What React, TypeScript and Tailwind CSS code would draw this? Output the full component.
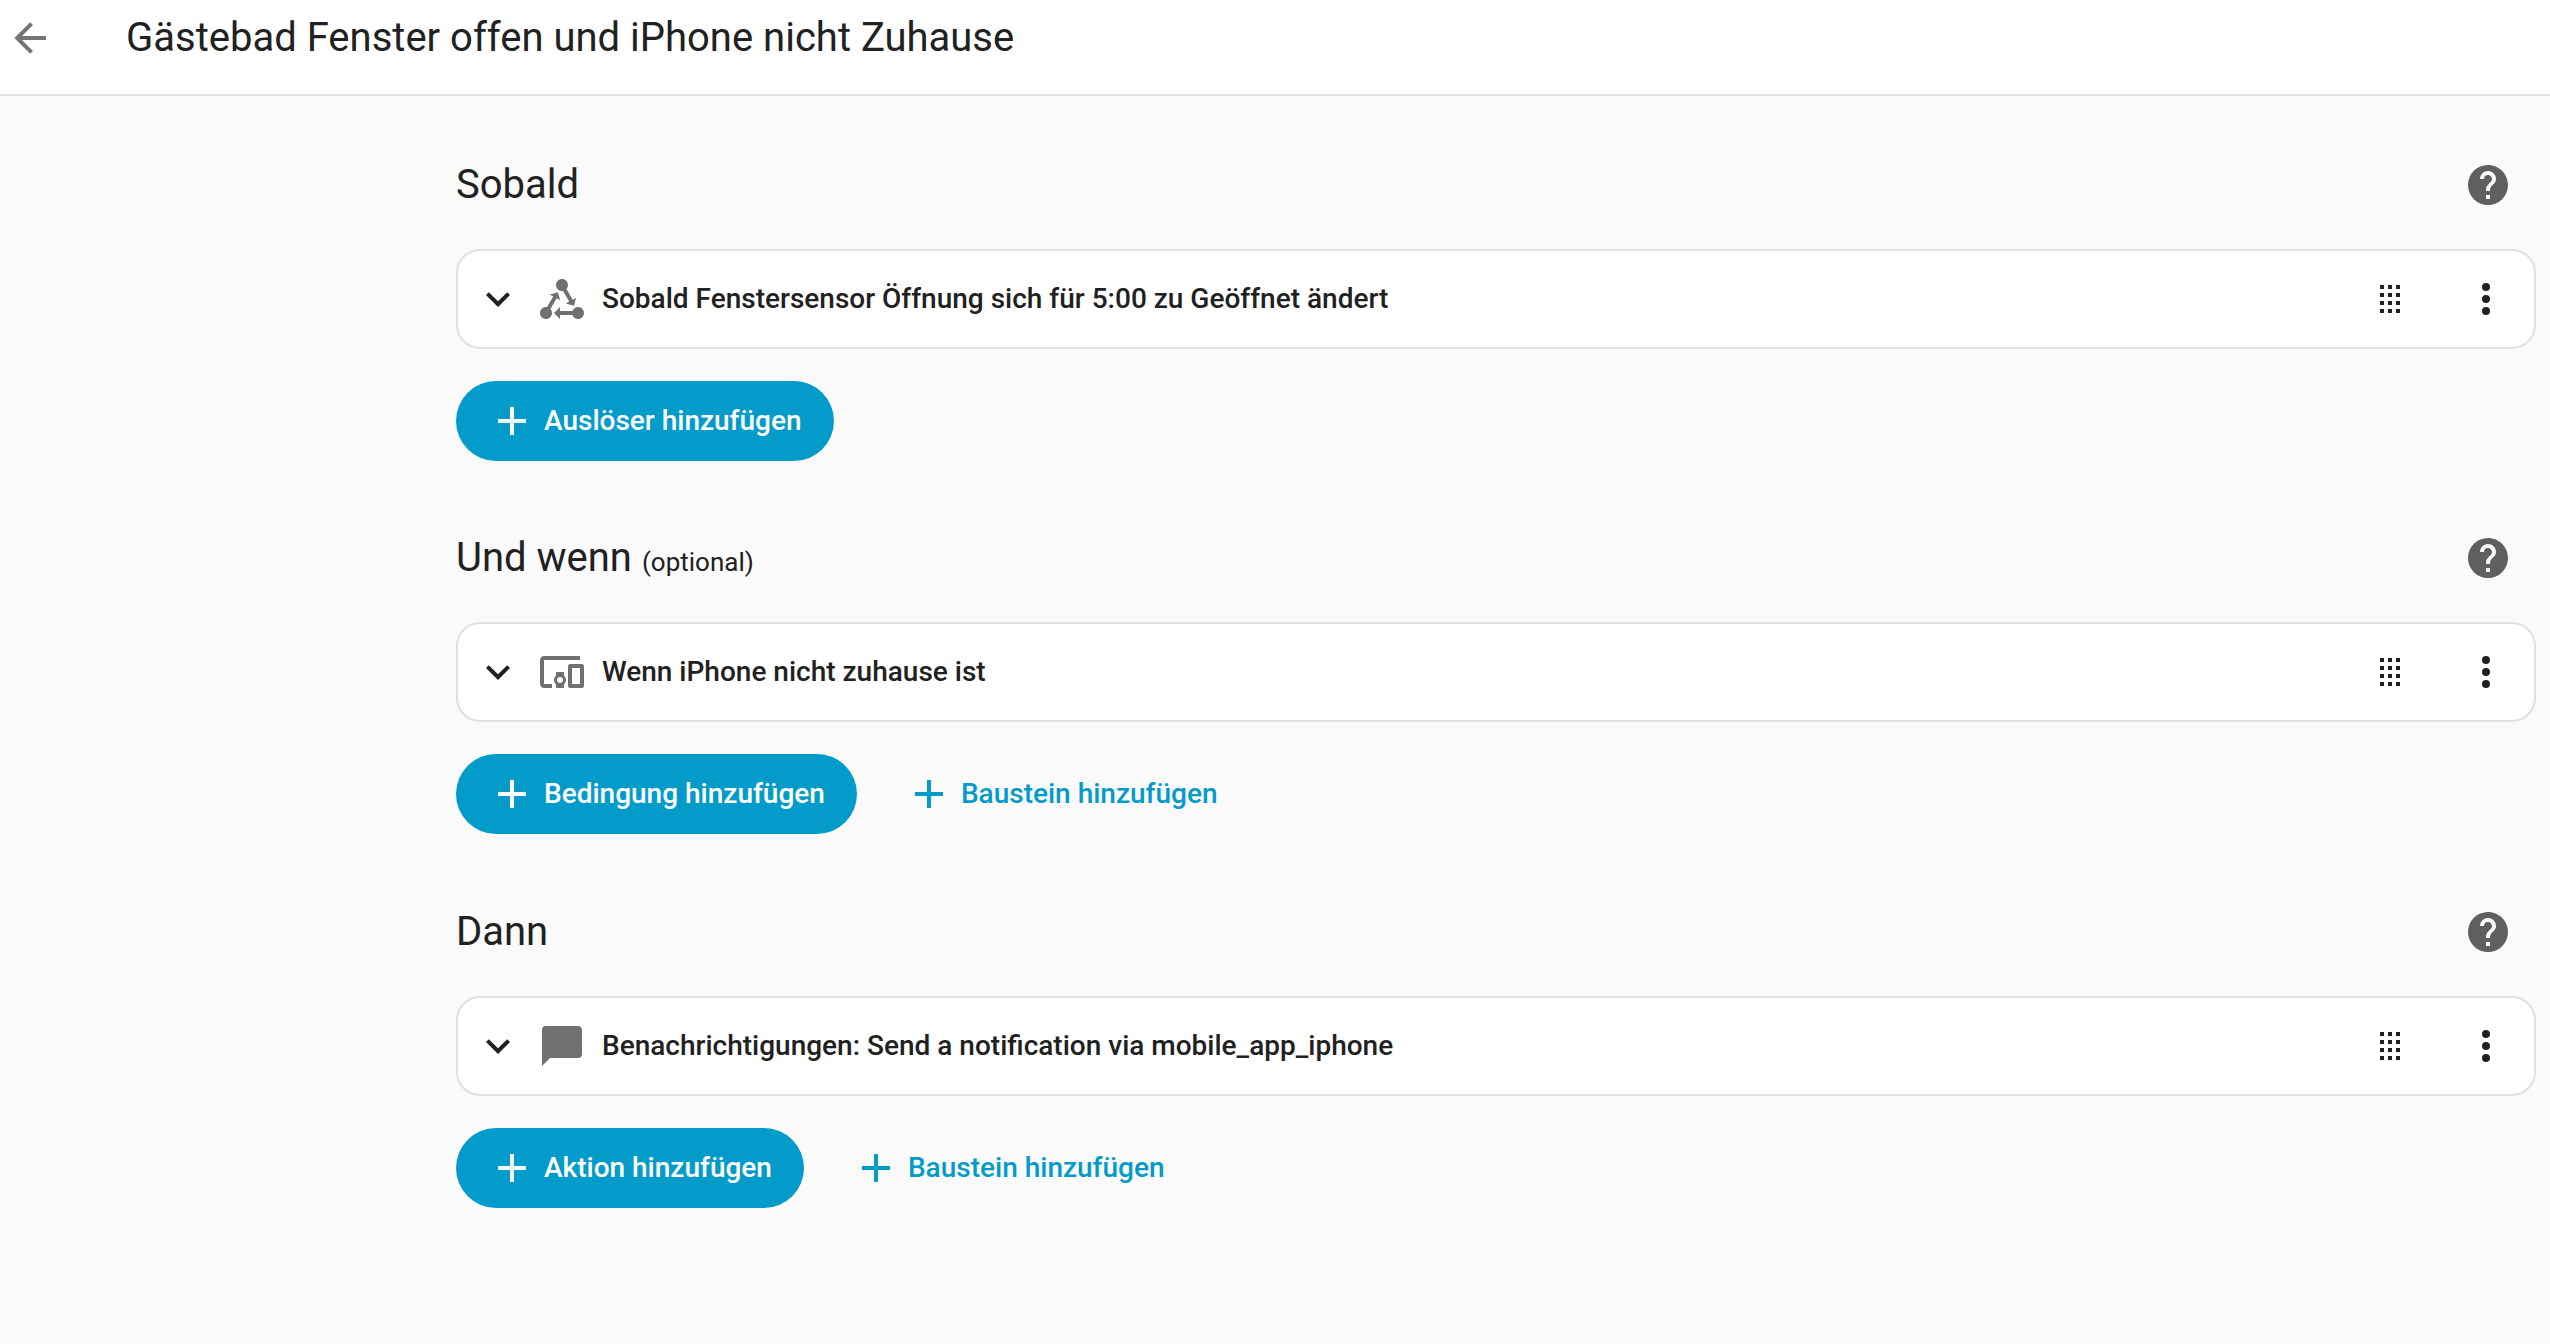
import React from "react";

const plus = "M19 13h-6v6h-2v-6H5v-2h6V5h2v6h6v2z";

function Plus() {
  return (
    <svg viewBox="0 0 24 24" className="w-12 h-12 fill-current shrink-0">
      <path d={plus} />
    </svg>
  );
}

function Help() {
  return (
    <svg viewBox="0 0 24 24" className="w-12 h-12 fill-[#5f5f5f]">
      <path d="M15.07,11.25L14.17,12.17C13.45,12.89 13,13.5 13,15H11V14.5C11,13.39 11.45,12.39 12.17,11.67L13.41,10.41C13.78,10.05 14,9.55 14,9C14,7.89 13.1,7 12,7A2,2 0 0,0 10,9H8A4,4 0 0,1 12,5A4,4 0 0,1 16,9C16,9.88 15.64,10.67 15.07,11.25M13,19H11V17H13M12,2A10,10 0 0,0 2,12A10,10 0 0,0 12,22A10,10 0 0,0 22,12C22,6.47 17.5,2 12,2Z" />
    </svg>
  );
}

function Row({ icon, text }: { icon: React.ReactNode; text: string }) {
  return (
    <div className="h-[100px] rounded-[24px] border-2 border-[#e0e0e0] bg-white flex items-center pl-4 pr-6 gap-4">
      <svg viewBox="0 0 24 24" className="w-12 h-12 fill-[#212121] shrink-0">
        <path d="M7.41 8.58L12 13.17l4.59-4.59L18 10l-6 6-6-6z" />
      </svg>
      <div className="w-12 h-12 shrink-0">{icon}</div>
      <div className="text-[28px] font-medium text-[#212121] flex-1">{text}</div>
      <svg viewBox="0 0 24 24" className="w-12 h-12 fill-[#212121] shrink-0">
        <path d="M7 19v-2h2v2H7m4 0v-2h2v2h-2m4 0v-2h2v2h-2m-8-4v-2h2v2H7m4 0v-2h2v2h-2m4 0v-2h2v2h-2m-8-4V9h2v2H7m4 0V9h2v2h-2m4 0V9h2v2h-2M7 7V5h2v2H7m4 0V5h2v2h-2m4 0V5h2v2h-2z" />
      </svg>
      <svg viewBox="0 0 24 24" className="w-12 h-12 ml-8 fill-[#212121] shrink-0">
        <path d="M12 16a2 2 0 0 1 2 2 2 2 0 0 1-2 2 2 2 0 0 1-2-2 2 2 0 0 1 2-2m0-6a2 2 0 0 1 2 2 2 2 0 0 1-2 2 2 2 0 0 1-2-2 2 2 0 0 1 2-2m0-6a2 2 0 0 1 2 2 2 2 0 0 1-2 2 2 2 0 0 1-2-2 2 2 0 0 1 2-2z" />
      </svg>
    </div>
  );
}

function Primary({ label }: { label: string }) {
  return (
    <div className="h-[80px] rounded-full bg-[#039bc9] text-white flex items-center px-8 gap-2 text-[28px] font-medium">
      <Plus />
      {label}
    </div>
  );
}

function Secondary({ label }: { label: string }) {
  return (
    <div className="h-[80px] flex items-center ml-12 gap-2 text-[#039bc9] text-[28px] font-medium">
      <Plus />
      {label}
    </div>
  );
}

function Section({
  title,
  optional,
  icon,
  text,
  primary,
  secondary,
}: {
  title: string;
  optional?: boolean;
  icon: React.ReactNode;
  text: string;
  primary: string;
  secondary?: boolean;
}) {
  return (
    <section className="mb-[73.4px]">
      <div className="h-[48px] flex items-center justify-between pr-[24px]">
        <div className="text-[40px] text-[#212121] leading-none">
          {title}
          {optional && <span className="text-[26px] ml-[10px]">(optional)</span>}
        </div>
        <Help />
      </div>
      <div className="mt-[40px]">
        <Row icon={icon} text={text} />
      </div>
      <div className="mt-[32px] flex">
        <Primary label={primary} />
        {secondary && <Secondary label="Baustein hinzufügen" />}
      </div>
    </section>
  );
}

export default function App() {
  return (
    <div className="w-[2550px] h-[1344px] bg-[#fafafa] overflow-hidden font-['Roboto',sans-serif]">
      <header className="h-[96px] bg-white border-b-2 border-[#e0e0e0] flex items-start pt-[14px]">
        <svg viewBox="0 0 24 24" className="w-12 h-12 ml-[6px] fill-[#757575]">
          <path d="M20 11v2H8l5.500 5.500-1.420 1.420L4.160 12l7.920-7.920L13.500 5.500 8 11h12z" />
        </svg>
        <div className="ml-[72px] leading-[48px] text-[40px] text-[#212121]">
          Gästebad Fenster offen und iPhone nicht Zuhause
        </div>
      </header>
      <main className="ml-[456px] mr-[14px] pt-[65px]">
        <Section
          title="Sobald"
          icon={
            <svg viewBox="0 0 24 24" className="w-full h-full fill-[#707070]">
              <path d="M6.27 17.05C6.72 17.58 7 18.25 7 19C7 20.66 5.66 22 4 22S1 20.66 1 19 2.34 16 4 16C4.18 16 4.36 16 4.53 16.05L7.6 10.69L5.86 9.7L9.95 8.58L11.07 12.67L9.33 11.68L6.27 17.05M20 16C18.7 16 17.6 16.84 17.18 18H11V16L8 19L11 22V20H17.18C17.6 21.16 18.7 22 20 22C21.66 22 23 20.66 23 19S21.66 16 20 16M12 8C12.18 8 12.36 8 12.53 7.95L15.6 13.31L13.86 14.3L17.95 15.42L19.07 11.33L17.33 12.32L14.27 6.95C14.72 6.42 15 5.75 15 5C15 3.34 13.66 2 12 2S9 3.34 9 5 10.34 8 12 8Z" />
            </svg>
          }
          text="Sobald Fenstersensor Öffnung sich für 5:00 zu Geöffnet ändert"
          primary="Auslöser hinzufügen"
        />
        <Section
          title="Und wenn"
          optional
          icon={
            <svg viewBox="0 0 24 24" className="w-full h-full fill-[#707070]">
              <path d="M3 6H21V4H3C1.9 4 1 4.9 1 6V18C1 19.1 1.9 20 3 20H7V18H3V6M13 12H9V13.78C8.39 14.33 8 15.11 8 16C8 16.89 8.39 17.67 9 18.22V20H13V18.22C13.61 17.67 14 16.88 14 16S13.61 14.33 13 13.78V12M11 17.5C10.17 17.5 9.5 16.83 9.5 16S10.17 14.5 11 14.5 12.5 15.17 12.5 16 11.83 17.5 11 17.5M22 8H16C15.5 8 15 8.5 15 9V19C15 19.5 15.5 20 16 20H22C22.5 20 23 19.5 23 19V9C23 8.5 22.5 8 22 8M21 18H17V10H21V18Z" />
            </svg>
          }
          text="Wenn iPhone nicht zuhause ist"
          primary="Bedingung hinzufügen"
          secondary
        />
        <Section
          title="Dann"
          icon={
            <svg viewBox="0 0 24 24" className="w-full h-full fill-[#707070]">
              <path d="M20,2H4A2,2 0 0,0 2,4V22L6,18H20A2,2 0 0,0 22,16V4C22,2.89 21.1,2 20,2Z" />
            </svg>
          }
          text="Benachrichtigungen: Send a notification via mobile_app_iphone"
          primary="Aktion hinzufügen"
          secondary
        />
      </main>
    </div>
  );
}
